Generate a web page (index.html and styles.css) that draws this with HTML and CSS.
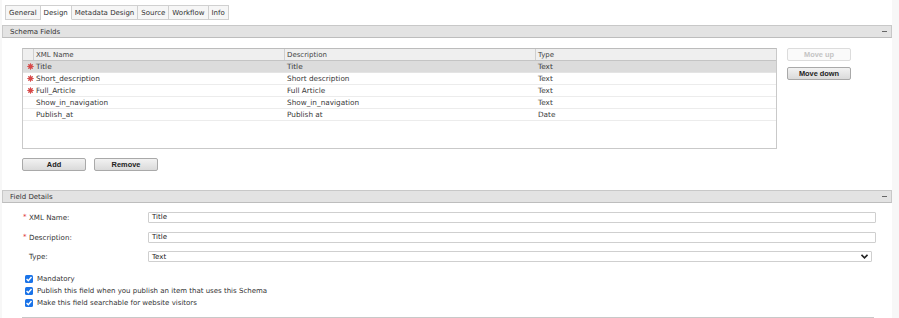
FILE: index.html
```html
<!DOCTYPE html>
<html>
<head>
<meta charset="utf-8">
<link rel="stylesheet" href="styles.css">
</head>
<body>
<div class="page">
  <div class="tabs">
    <span class="tab">General</span>
    <span class="tab active">Design</span>
    <span class="tab">Metadata Design</span>
    <span class="tab">Source</span>
    <span class="tab">Workflow</span>
    <span class="tab">Info</span>
  </div>

  <div class="section-head"><span>Schema Fields</span><span class="minus"></span></div>

  <div class="schema">
    <div class="grid">
      <div class="row head">
        <span class="c0"></span><span class="c1">XML Name</span><span class="c2">Description</span><span class="c3">Type</span>
      </div>
      <div class="row sel">
        <span class="c0"><svg class="star" width="7" height="7" viewBox="0 0 6 6"><circle cx="3" cy="3" r="1.9" fill="#c62f2f"/><path d="M3 0.2V5.8M0.2 3H5.8M1 1L5 5M5 1L1 5" stroke="#d94a4a" stroke-width="0.8"/></svg></span><span class="c1">Title</span><span class="c2">Title</span><span class="c3">Text</span>
      </div>
      <div class="row">
        <span class="c0"><svg class="star" width="7" height="7" viewBox="0 0 6 6"><circle cx="3" cy="3" r="1.9" fill="#c62f2f"/><path d="M3 0.2V5.8M0.2 3H5.8M1 1L5 5M5 1L1 5" stroke="#d94a4a" stroke-width="0.8"/></svg></span><span class="c1">Short_description</span><span class="c2">Short description</span><span class="c3">Text</span>
      </div>
      <div class="row">
        <span class="c0"><svg class="star" width="7" height="7" viewBox="0 0 6 6"><circle cx="3" cy="3" r="1.9" fill="#c62f2f"/><path d="M3 0.2V5.8M0.2 3H5.8M1 1L5 5M5 1L1 5" stroke="#d94a4a" stroke-width="0.8"/></svg></span><span class="c1">Full_Article</span><span class="c2">Full Article</span><span class="c3">Text</span>
      </div>
      <div class="row">
        <span class="c0"></span><span class="c1">Show_in_navigation</span><span class="c2">Show_in_navigation</span><span class="c3">Text</span>
      </div>
      <div class="row">
        <span class="c0"></span><span class="c1">Publish_at</span><span class="c2">Publish at</span><span class="c3">Date</span>
      </div>
    </div>
    <div class="side-buttons">
      <button class="btn disabled">Move up</button>
      <button class="btn">Move down</button>
    </div>
  </div>

  <div class="actions">
    <button class="btn wide">Add</button>
    <button class="btn wide">Remove</button>
  </div>

  <div class="section-head second"><span>Field Details</span><span class="minus"></span></div>

  <div class="details">
    <div class="frow">
      <label class="lbl"><i class="req">*</i>XML Name:</label>
      <div class="input">Title</div>
    </div>
    <div class="frow">
      <label class="lbl"><i class="req">*</i>Description:</label>
      <div class="input">Title</div>
    </div>
    <div class="frow short">
      <label class="lbl"><i class="req"></i>Type:</label>
      <div class="input select">Text<svg class="chev" width="7" height="5" viewBox="0 0 7 5"><path d="M0.5 0.8 L3.5 3.8 L6.5 0.8" fill="none" stroke="#222" stroke-width="1.6"/></svg></div>
    </div>
    <div class="checks">
      <div class="check"><span class="cb"><svg width="8" height="8" viewBox="0 0 8 8"><path d="M1.6 4.1 L3.3 5.8 L6.5 2" fill="none" stroke="#fff" stroke-width="1.4"/></svg></span>Mandatory</div>
      <div class="check"><span class="cb"><svg width="8" height="8" viewBox="0 0 8 8"><path d="M1.6 4.1 L3.3 5.8 L6.5 2" fill="none" stroke="#fff" stroke-width="1.4"/></svg></span>Publish this field when you publish an item that uses this Schema</div>
      <div class="check"><span class="cb"><svg width="8" height="8" viewBox="0 0 8 8"><path d="M1.6 4.1 L3.3 5.8 L6.5 2" fill="none" stroke="#fff" stroke-width="1.4"/></svg></span>Make this field searchable for website visitors</div>
    </div>
    <div class="bottom-line"></div>
  </div>
</div>
</body>
</html>
```
FILE: styles.css
```css
* { box-sizing: border-box; }
html, body { margin: 0; padding: 0; }
body {
  background: #f7f7f7;
  font-family: "DejaVu Sans", Verdana, sans-serif;
  font-size: 7px;
  color: #333;
  width: 899px;
  height: 318px;
  overflow: hidden;
}
.page {
  background: #fff;
  width: 890px;
  height: 318px;
  margin-left: 2px;
  padding-top: 5px;
}
.tabs {
  display: flex;
  padding-left: 3px;
  height: 15px;
}
.tab {
  display: flex;
  align-items: center;
  padding: 0 3px;
  height: 15px;
  border: 1px solid #d0d0d0;
  border-left: none;
  background: #f6f6f6;
  color: #333;
  font-size: 7px;
}
.tab:first-child { border-left: 1px solid #d0d0d0; }
.tab.active { background: #fff; border-bottom-color: #fff; }

.section-head {
  margin-top: 5px;
  height: 13px;
  background: #e3e3e3;
  border: 1px solid #c8c8c8;
  border-bottom-color: #bdbdbd;
  display: flex;
  align-items: center;
  justify-content: space-between;
  padding: 0 4px 0 7px;
  color: #333;
  font-size: 7px;
}
.section-head.second { margin-top: 19px; }
.minus {
  width: 5px;
  height: 1px;
  background: #666;
}

.schema {
  display: flex;
  align-items: flex-start;
  padding: 10px 0 0 20px;
}
.grid {
  width: 755px;
  height: 101px;
  border: 1px solid #c9c9c9;
  border-top-color: #bcbcbc;
}
.row {
  display: flex;
  height: 12px;
  align-items: center;
  border-bottom: 1px solid #ececec;
  font-size: 7.3px;
  color: #3a3a3a;
}
.row.head {
  background: #efefef;
  border-bottom: 1px solid #c4c4c4;
  height: 12px;
  font-size: 7px;
}
.row.sel { background: #dcdcdc; border-bottom-color: #e4e4e4; }
.row span {
  display: flex;
  align-items: center;
  height: 100%;
  padding-left: 2px;
  white-space: nowrap;
}
.c0 { width: 11px; justify-content: center; padding-left: 0 !important; }
.c1 { width: 251px; }
.c2 { width: 251px; }
.c3 { flex: 1; }
.head .c0, .head .c1, .head .c2 { border-right: 1px solid #cfcfcf; }
.head span { color: #444; }
.star {
  display: block;
  margin-left: 3px;
}

.side-buttons {
  display: flex;
  flex-direction: column;
  gap: 6px;
  margin-left: 10px;
}
.btn {
  font-family: "Liberation Sans", Arial, sans-serif;
  font-size: 7.4px;
  font-weight: bold;
  color: #222;
  width: 64px;
  height: 13px;
  padding: 0;
  border: 1px solid #a9a9a9;
  border-radius: 2px;
  background: linear-gradient(#f2f2f2, #dadada);
  line-height: 11px;
}
.btn.disabled {
  color: #c4c4c4;
  border-color: #dcdcdc;
  background: #fafafa;
}
.actions {
  display: flex;
  gap: 8px;
  padding: 9px 0 0 20px;
}
.btn.wide { width: 64px; }

.details {
  padding: 4px 0 0 20px;
}
.frow {
  display: flex;
  align-items: center;
  height: 20px;
}
.frow.short { height: 19px; }
.lbl {
  width: 126px;
  display: flex;
  align-items: center;
  color: #333;
  font-size: 7.1px;
}
.req {
  font-style: normal;
  color: #d33;
  width: 6px;
  display: inline-block;
  font-size: 7px;
  margin-left: 1px;
}
.input {
  width: 728px;
  height: 11px;
  border: 1px solid #cfcfcf;
  border-radius: 1px;
  display: flex;
  align-items: center;
  padding-left: 3px;
  color: #222;
  font-size: 7px;
}
.input.select {
  width: 724px;
  justify-content: space-between;
  padding-right: 3px;
}
.chev { display: block; }
.checks {
  display: flex;
  flex-direction: column;
  gap: 4px;
  margin-top: 9px;
  padding-left: 3px;
}
.check {
  display: flex;
  align-items: center;
  gap: 4px;
  height: 8px;
  color: #333;
  font-size: 7px;
}
.cb {
  width: 8px;
  height: 8px;
  border-radius: 1.5px;
  background: #1a73e8;
  display: flex;
  align-items: center;
  justify-content: center;
}
.cb svg { display: block; }
.bottom-line {
  margin-top: 10px;
  width: 852px;
  height: 1px;
  background: #c8c8c8;
}
```
